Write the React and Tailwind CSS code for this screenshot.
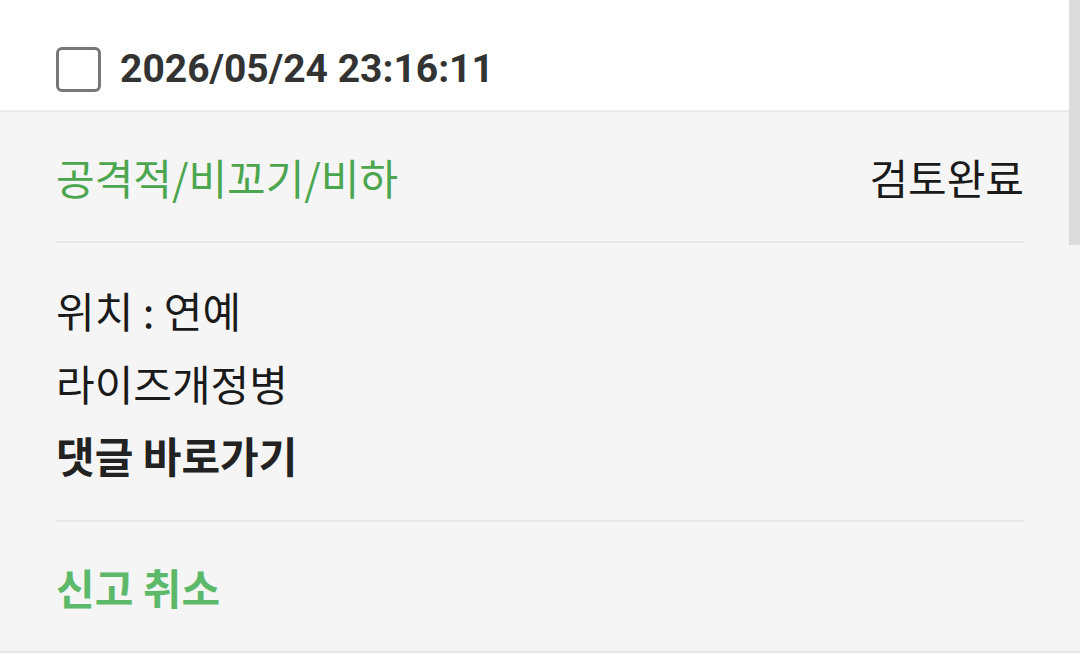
export default function App() {
  return (
    <div
      className="relative w-[1080px] h-[659px] overflow-hidden bg-white"
      style={{ fontFamily: 'Roboto, "Noto Sans CJK KR", sans-serif' }}
    >
      <div className="h-[112px] flex items-end gap-[19px] pl-[56px] pb-[18px] border-b-2 border-[#ebebeb]">
        <div className="w-[45px] h-[45px] rounded-[6px] border-[3px] border-[#777777] bg-white" />
        <span className="text-[39px] leading-[45px] font-bold text-[#333333]">2026/05/24 23:16:11</span>
      </div>

      <div
        className="bg-[#f5f5f5] px-[56px] border-b-2 border-[#e6e6e6]"
        style={{ fontFamily: '"Noto Sans CJK KR", sans-serif' }}
      >
        <div className="h-[131px] flex items-center justify-between border-b-2 border-[#e8e8e8]">
          <span className="text-[42px] text-[#4ca64f]">공격적/비꼬기/비하</span>
          <span className="text-[42px] text-[#1a1a1a]">검토완료</span>
        </div>

        <div className="flex flex-col pt-[31px] pb-[28px] text-[42px] leading-[72.5px] text-[#1a1a1a]">
          <span>위치 : 연예</span>
          <span>라이즈개정병</span>
          <span className="font-bold text-[#222222]">댓글 바로가기</span>
        </div>

        <div className="h-[131px] flex items-center border-t-2 border-[#e8e8e8]">
          <span className="text-[42px] font-bold text-[#5cb96a]">신고 취소</span>
        </div>
      </div>

      <div className="absolute top-0 right-0 w-[11px] h-[245px] bg-[#dcdcdc]" />
    </div>
  )
}
